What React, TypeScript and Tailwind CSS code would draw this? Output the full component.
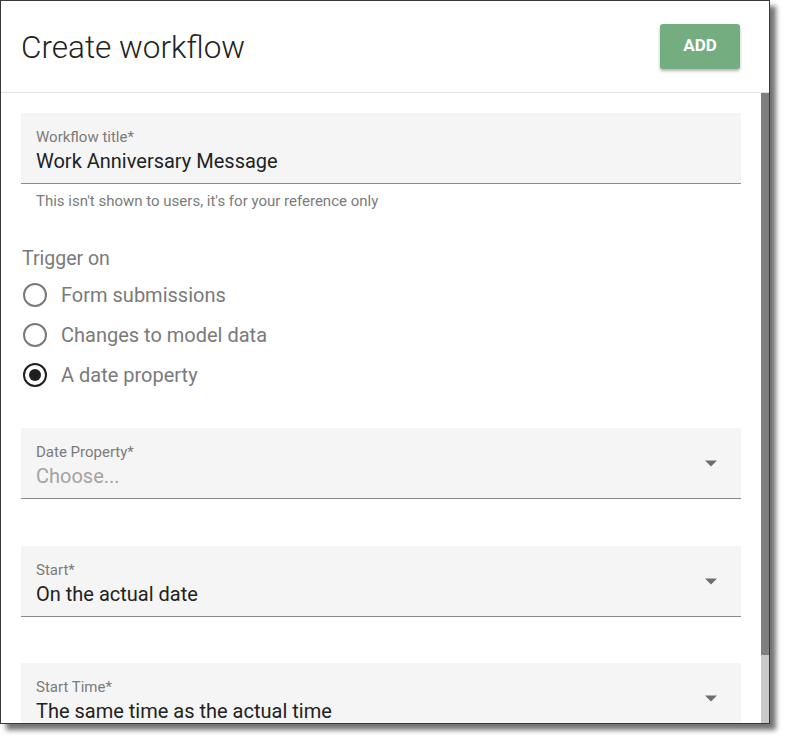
import React from "react";

type FieldProps = {
    label: string;
    value: string;
    placeholder?: boolean;
    select?: boolean;
    className?: string;
};

// Filled text field / select, material style
const Field = ({ label, value, placeholder, select, className }: FieldProps) => {
    return (
        <div className={`relative h-[71px] bg-[#f5f5f5] border-b border-[#8a8a8a] pl-[15px] pr-[40px] pt-[15px] ${className ?? ""}`}>
            <div className="text-[15px] leading-[18px] text-[#7b7b7b]">{label}</div>
            <div className={`mt-[2px] text-[20px] leading-[26px] whitespace-nowrap ${placeholder ? "text-[#a3a3a3]" : "text-[#222222]"}`}>
                {value}
            </div>
            {select && (
                <svg className="absolute right-[23px] top-[32px]" width="14" height="7" viewBox="0 0 14 7">
                    <path d="M1 0.5 L13 0.5 L7 6.5 Z" fill="#6e6e6e" />
                </svg>
            )}
        </div>
    );
};

type RadioProps = {
    label: string;
    checked?: boolean;
};

const Radio = ({ label, checked }: RadioProps) => {
    return (
        <div className="flex h-10 items-center">
            <div
                className={`flex h-6 w-6 items-center justify-center rounded-full border-2 ${checked ? "border-[#1f1f1f]" : "border-[#7a7a7a]"}`}
            >
                {checked && <div className="h-3 w-3 rounded-full bg-[#1f1f1f]" />}
            </div>
            <span className="ml-[14px] text-[20px] leading-[26px] text-[#7a7a7a]">{label}</span>
        </div>
    );
};

export default function App() {
    return (
        <div className="h-[740px] w-[785px] bg-white" style={{ fontFamily: "Roboto, 'Liberation Sans', sans-serif" }}>
            <div className="flex h-[724px] w-[770px] flex-col overflow-hidden border border-[#383838] bg-white shadow-[6px_6px_5px_rgba(0,0,0,0.55)]">
                {/* Header */}
                <div className="flex h-[92px] shrink-0 items-center justify-between border-b border-[#e2e2e2] pl-[20px] pr-[29px]">
                    <h1 className="pt-[2px] text-[31.5px] font-light leading-9 text-[#222222]">Create workflow</h1>
                    <button className="mb-[1px] h-[45px] w-[80px] rounded-[3px] bg-[#74ae80] text-[17px] font-bold text-white shadow-[0_2px_3px_rgba(0,0,0,0.3)]">
                        ADD
                    </button>
                </div>

                {/* Body with scrollbar */}
                <div className="flex min-h-0 flex-1">
                    <div className="flex-1 overflow-hidden px-5 pt-5">
                        <Field label="Workflow title*" value="Work Anniversary Message" />
                        <p className="mt-[8px] pl-[15px] text-[15px] leading-[18px] text-[#7b7b7b]">
                            This isn't shown to users, it's for your reference only
                        </p>

                        <div className="mt-[36px] pl-[1px] text-[19.5px] leading-[26px] text-[#7a7a7a]">Trigger on</div>
                        <div className="mt-[3px] pl-[2px]">
                            <Radio label="Form submissions" />
                            <Radio label="Changes to model data" />
                            <Radio label="A date property" checked />
                        </div>

                        <Field className="mt-[33px]" label="Date Property*" value="Choose..." placeholder select />
                        <Field className="mt-[47px]" label="Start*" value="On the actual date" select />
                        <Field className="mt-[46px]" label="Start Time*" value="The same time as the actual time" select />
                    </div>

                    {/* Scrollbar */}
                    <div className="flex w-2 shrink-0 flex-col">
                        <div className="h-[562px] bg-[#7f7f7f]" />
                        <div className="flex-1 bg-[#c8c8c8]" />
                    </div>
                </div>
            </div>
        </div>
    );
}
